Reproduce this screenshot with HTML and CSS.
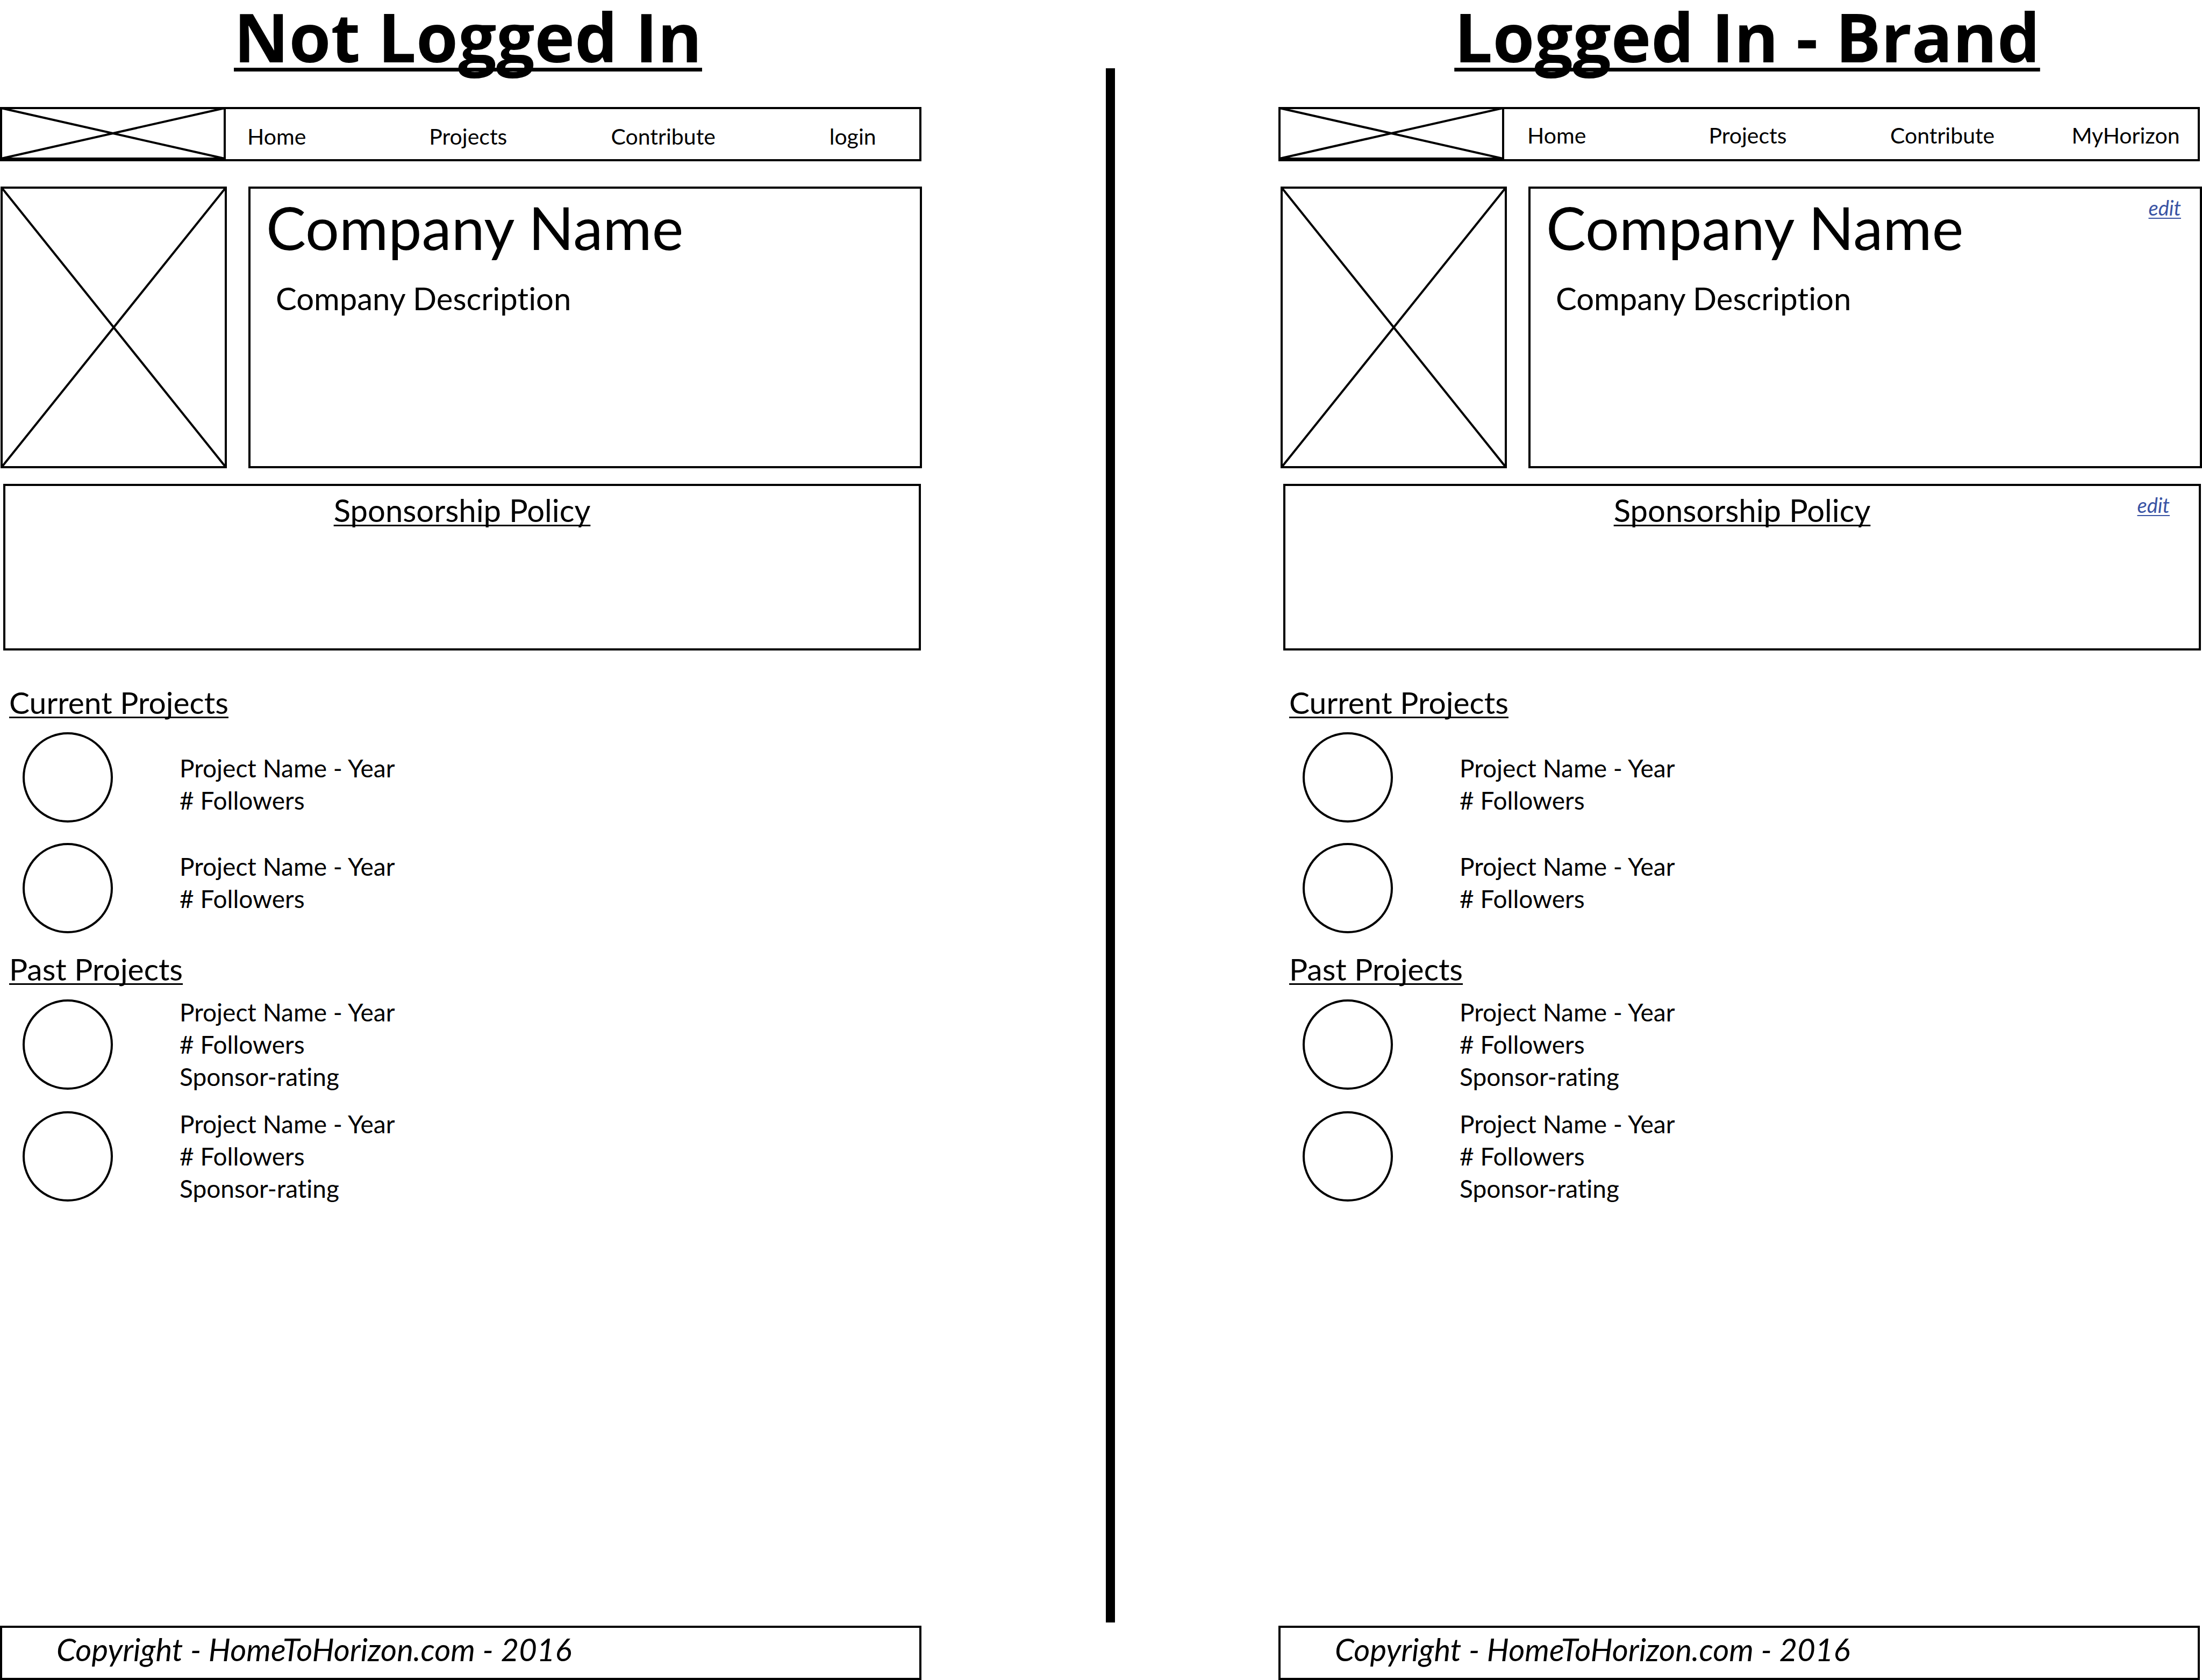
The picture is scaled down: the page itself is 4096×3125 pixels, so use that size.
FILE: index.html
```html
<!DOCTYPE html>
<html lang="en">
<head>
  <meta charset="utf-8">
  <meta name="viewport" content="width=device-width, initial-scale=1">
  <title>Company page wireframes</title>
  <link rel="stylesheet" href="styles.css">
</head>
<body>
  <main class="board">
    <section class="wireframe">
      <h1 class="board-title">Not Logged In</h1>
      <header class="site-header">
        <svg class="logo" viewBox="0 0 420 98" preserveAspectRatio="none" role="img" aria-label="Logo placeholder">
          <path d="M2 2H418V96H2ZM2 2L418 96M418 2L2 96"/>
        </svg>
        <nav class="site-nav">
          <a href="#">Home</a>
          <a href="#">Projects</a>
          <a href="#">Contribute</a>
          <a href="#" class="nav-login">login</a>
        </nav>
      </header>
      <div class="content">
        <div class="profile">
          <svg class="photo" viewBox="0 0 421 524" preserveAspectRatio="none" role="img" aria-label="Company picture placeholder">
            <path d="M2 2H419V522H2ZM2 2L419 522M419 2L2 522"/>
          </svg>
          <div class="info">
            <div>
              <h2 class="company-name">Company Name</h2>
              <p class="company-description">Company Description</p>
            </div>
          </div>
        </div>
        <section class="policy">
          <h3 class="heading policy-heading">Sponsorship Policy</h3>
        </section>
        <section class="projects">
          <h3 class="heading">Current Projects</h3>
          <ul class="project-list current-list">
            <li class="project">
              <span class="avatar"></span>
              <div class="project-text text-low"><p>Project Name - Year</p><p># Followers</p></div>
            </li>
            <li class="project">
              <span class="avatar"></span>
              <div class="project-text text-high"><p>Project Name - Year</p><p># Followers</p></div>
            </li>
          </ul>
          <h3 class="heading">Past Projects</h3>
          <ul class="project-list past-list">
            <li class="project">
              <span class="avatar"></span>
              <div class="project-text"><p>Project Name - Year</p><p># Followers</p><p>Sponsor-rating</p></div>
            </li>
            <li class="project">
              <span class="avatar"></span>
              <div class="project-text"><p>Project Name - Year</p><p># Followers</p><p>Sponsor-rating</p></div>
            </li>
          </ul>
        </section>
      </div>
      <footer class="site-footer">Copyright - HomeToHorizon.com - 2016</footer>
    </section>

    <div class="divider"></div>

    <section class="wireframe wireframe-brand">
      <h1 class="board-title">Logged In - Brand</h1>
      <header class="site-header">
        <svg class="logo" viewBox="0 0 420 98" preserveAspectRatio="none" role="img" aria-label="Logo placeholder">
          <path d="M2 2H418V96H2ZM2 2L418 96M418 2L2 96"/>
        </svg>
        <nav class="site-nav">
          <a href="#">Home</a>
          <a href="#">Projects</a>
          <a href="#">Contribute</a>
          <a href="#">MyHorizon</a>
        </nav>
      </header>
      <div class="content">
        <div class="profile">
          <svg class="photo" viewBox="0 0 421 524" preserveAspectRatio="none" role="img" aria-label="Company picture placeholder">
            <path d="M2 2H419V522H2ZM2 2L419 522M419 2L2 522"/>
          </svg>
          <div class="info">
            <div>
              <h2 class="company-name">Company Name</h2>
              <p class="company-description">Company Description</p>
            </div>
            <a href="#" class="edit">edit</a>
          </div>
        </div>
        <section class="policy">
          <h3 class="heading policy-heading">Sponsorship Policy</h3>
          <a href="#" class="edit">edit</a>
        </section>
        <section class="projects">
          <h3 class="heading">Current Projects</h3>
          <ul class="project-list current-list">
            <li class="project">
              <span class="avatar"></span>
              <div class="project-text text-low"><p>Project Name - Year</p><p># Followers</p></div>
            </li>
            <li class="project">
              <span class="avatar"></span>
              <div class="project-text text-high"><p>Project Name - Year</p><p># Followers</p></div>
            </li>
          </ul>
          <h3 class="heading">Past Projects</h3>
          <ul class="project-list past-list">
            <li class="project">
              <span class="avatar"></span>
              <div class="project-text"><p>Project Name - Year</p><p># Followers</p><p>Sponsor-rating</p></div>
            </li>
            <li class="project">
              <span class="avatar"></span>
              <div class="project-text"><p>Project Name - Year</p><p># Followers</p><p>Sponsor-rating</p></div>
            </li>
          </ul>
        </section>
      </div>
      <footer class="site-footer">Copyright - HomeToHorizon.com - 2016</footer>
    </section>
  </main>
</body>
</html>
```
FILE: styles.css
```css
* {
  box-sizing: border-box;
}

body {
  margin: 0;
  background: #fff;
  color: #000;
  font-family: Lato, "Open Sans", sans-serif;
  font-variant-ligatures: no-common-ligatures;
  text-decoration-skip-ink: none;
}

h1, h2, h3, p, ul {
  margin: 0;
  padding: 0;
  font-weight: 400;
}

a {
  color: inherit;
  text-decoration: none;
}

.board {
  display: grid;
  grid-template-columns: 1715fr 342fr 17fr 304fr 1718fr;
  min-height: 100vh;
}

.wireframe {
  --inset: 1px;
  --nav-top: 26px;
  display: flex;
  flex-direction: column;
  min-width: 0;
}

.wireframe-brand {
  --inset: 4px;
  --nav-top: 24px;
  grid-column: 5;
}

.divider {
  grid-column: 3;
  margin: 127px 0 107px;
  background: #000;
}

.board-title {
  padding-left: 26px;
  font: 700 126px/134px "Open Sans", sans-serif;
  text-align: center;
  text-decoration: underline 7px;
  text-underline-offset: 10px;
}

/* Site header */
.site-header {
  display: grid;
  grid-template-columns: 416fr 1290fr;
  height: 101px;
  margin: 65px var(--inset) 0 0;
  border: 4px solid #000;
}

.logo, .photo {
  display: block;
  fill: none;
  stroke: #000;
  stroke-width: 4px;
}

.logo {
  width: calc(100% + 4px);
  height: 98px;
  margin: -4px 0 0 -4px;
}

.site-nav {
  display: grid;
  grid-template-columns: 338fr 338fr 338fr 235fr;
  padding: var(--nav-top) 0 0 calc(var(--inset) + 39px);
  font-size: 41px;
  line-height: 50px;
}

.nav-login {
  margin-left: 68px;
}

/* Company profile */
.content {
  margin: 47px 0 64px var(--inset);
}

.profile {
  display: grid;
  grid-template-columns: 421fr 1253fr;
  gap: 40px;
  height: 524px;
}

.photo {
  width: 100%;
  height: 524px;
}

.info {
  display: flex;
  justify-content: space-between;
  align-items: flex-start;
  padding: 6px 35px 0 29px;
  border: 4px solid #000;
}

.company-name {
  font-size: 111px;
  line-height: 131px;
}

.company-description {
  margin: 32px 0 0 18px;
  font-size: 58px;
  line-height: 69px;
}

.edit {
  color: #3953a4;
  font-size: 38px;
  font-style: italic;
  line-height: 50px;
  text-decoration: underline 2px;
  text-underline-offset: 4px;
}

.info .edit {
  margin-top: 4px;
}

.heading {
  font-size: 57px;
  line-height: 69px;
  text-decoration: underline 3px;
  text-underline-offset: 5px;
}

.policy {
  display: grid;
  grid-template-columns: 1fr auto 1fr;
  align-items: start;
  height: 310px;
  margin: 29px 2px 0 5px;
  padding: 10px 54px 0;
  border: 4px solid #000;
}

.policy-heading {
  grid-column: 2;
  font-size: 58px;
}

.policy .edit {
  justify-self: end;
}

/* Project lists */
.projects {
  padding: 62px 0 0 16px;
}

.project-list {
  display: flex;
  flex-direction: column;
  padding-left: 25px;
  list-style: none;
}

.current-list {
  gap: 38px;
  margin: 21px 0 32px;
}

.past-list {
  gap: 28px;
  margin-top: 16px;
}

.project {
  display: flex;
  align-items: center;
  gap: 124px;
}

.avatar {
  flex: none;
  width: 168px;
  height: 168px;
  border: 4px solid #000;
  border-radius: 50%;
}

.project-text {
  font-size: 46px;
  line-height: 60px;
}

.text-low {
  padding-top: 26px;
}

.text-high {
  padding-bottom: 20px;
}

.site-footer {
  height: 101px;
  margin: auto var(--inset) 0 0;
  padding: 5px 101px 0;
  border: 4px solid #000;
  font-size: 58px;
  font-style: italic;
  line-height: 69px;
}
```
